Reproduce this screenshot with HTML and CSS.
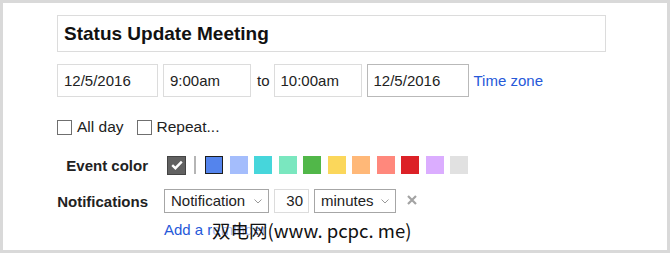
FILE: index.html
```html
<!DOCTYPE html>
<html lang="en">
<head>
    <meta charset="UTF-8">
    <meta name="viewport" content="width=device-width, initial-scale=1.0">
    <title>Event details</title>
    <link rel="stylesheet" href="styles.css">
</head>
<body>

<div class="frame">
    <div class="title-box">Status Update Meeting</div>

    <div class="date-row">
        <div class="box date">12/5/2016</div>
        <div class="box time">9:00am</div>
        <span class="to">to</span>
        <div class="box time">10:00am</div>
        <div class="box date active">12/5/2016</div>
        <a class="link" href="#">Time zone</a>
    </div>

    <div class="check-row">
        <label class="check"><span class="check-box"></span>All day</label>
        <label class="check"><span class="check-box"></span>Repeat...</label>
    </div>

    <div class="field-row color-row">
        <div class="field-label">Event color</div>
        <div class="swatches">
            <span class="swatch default">
                <svg width="12" height="10" viewBox="0 0 12 10"><path d="M1.2 5.2 L4.4 8.2 L10.8 1.6" fill="none" stroke="#fff" stroke-width="2.4"/></svg>
            </span>
            <span class="divider"></span>
            <span class="swatch selected" style="background:#5484ed"></span>
            <span class="swatch" style="background:#a4bdfc"></span>
            <span class="swatch" style="background:#46d6db"></span>
            <span class="swatch" style="background:#7ae7bf"></span>
            <span class="swatch" style="background:#51b749"></span>
            <span class="swatch" style="background:#fbd75b"></span>
            <span class="swatch" style="background:#ffb878"></span>
            <span class="swatch" style="background:#ff887c"></span>
            <span class="swatch" style="background:#dc2127"></span>
            <span class="swatch" style="background:#dbadff"></span>
            <span class="swatch" style="background:#e1e1e1"></span>
        </div>
    </div>

    <div class="field-row notif-row">
        <div class="field-label">Notifications</div>
        <div class="select kind">Notification
            <svg class="chev" width="8" height="5" viewBox="0 0 8 5"><path d="M0.5 0.5 L4 4 L7.5 0.5" fill="none" stroke="#999" stroke-width="1"/></svg>
        </div>
        <div class="box amount">30</div>
        <div class="select unit">minutes
            <svg class="chev" width="8" height="5" viewBox="0 0 8 5"><path d="M0.5 0.5 L4 4 L7.5 0.5" fill="none" stroke="#999" stroke-width="1"/></svg>
        </div>
        <svg class="remove" width="10" height="10" viewBox="0 0 10 10"><path d="M1 1 L9 9 M9 1 L1 9" stroke="#a3a3a3" stroke-width="2.2"/></svg>
    </div>

    <div class="reminder">
        <a class="link" href="#">Add a reminder</a>
        <span class="watermark">双电网(www. pcpc. me)</span>
    </div>
</div>

</body>
</html>
```

FILE: styles.css
```css
body {
    margin: 0;
    background: #d9d9d9;
    font-family: 'Liberation Sans', Arial, sans-serif;
    color: #222;
}
.frame {
    margin: 3px;
    height: 247px;
    background: #ffffff;
    padding: 12px 0 0 54px;
    box-sizing: border-box;
}
.title-box {
    width: 549px;
    height: 37px;
    border: 1px solid #dcdcdc;
    box-sizing: border-box;
    padding-left: 6px;
    font-size: 19px;
    font-weight: bold;
    line-height: 35px;
    color: #111;
}
.date-row {
    display: flex;
    align-items: center;
    margin-top: 12px;
    height: 33px;
    font-size: 15px;
}
.box {
    height: 33px;
    border: 1px solid #dcdcdc;
    box-sizing: border-box;
    padding-left: 6px;
    line-height: 31px;
    margin-right: 5px;
    color: #222;
}
.date { width: 101px; }
.date.active {
    width: 102px;
    border-color: #b9b9b9;
}
.time { width: 88px; }
.to {
    margin: 0 4px 0 1px;
}
.link {
    color: #2659d9;
    text-decoration: none;
}
.check-row {
    display: flex;
    align-items: center;
    margin-top: 20px;
    height: 20px;
    font-size: 15.5px;
}
.check {
    display: flex;
    align-items: center;
    margin-right: 13px;
}
.check-box {
    width: 15px;
    height: 15px;
    border: 1px solid #6f6f6f;
    box-sizing: border-box;
    margin-right: 5px;
}
.field-row {
    display: flex;
    align-items: center;
    height: 24px;
    font-size: 15px;
}
.color-row { margin-top: 16px; }
.notif-row { margin-top: 12px; }
.field-label {
    width: 91px;
    text-align: right;
    font-weight: bold;
    margin-right: 16px;
    color: #222;
    white-space: nowrap;
}
.swatches {
    display: flex;
    align-items: center;
    margin-left: 3px;
}
.swatch {
    width: 18px;
    height: 18px;
    box-sizing: border-box;
    margin-right: 6.5px;
    display: flex;
    align-items: center;
    justify-content: center;
}
.swatch.default {
    width: 19px;
    height: 19px;
    background: #616161;
    border: 1px solid #444;
    margin-right: 8px;
}
.swatch.selected {
    border: 1px solid #1d1d1d;
}
.divider {
    width: 2px;
    height: 18px;
    background: #b5b5b5;
    margin-right: 9px;
}
.select {
    height: 24px;
    border: 1px solid #a6a6a6;
    box-sizing: border-box;
    padding-left: 6px;
    line-height: 22px;
    display: flex;
    align-items: center;
    margin-right: 5px;
    color: #222;
}
.select .chev {
    margin-left: auto;
    margin-right: 6px;
}
.kind { width: 105px; }
.unit { width: 82px; }
.amount {
    width: 35px;
    height: 24px;
    line-height: 22px;
    text-align: right;
    padding: 0 5px 0 0;
}
.remove {
    margin-left: 6px;
    margin-bottom: 2px;
}
.reminder {
    position: relative;
    margin-top: 8px;
    padding-left: 107px;
    height: 18px;
    line-height: 18px;
    font-size: 15px;
}
.watermark {
    position: absolute;
    left: 155px;
    top: -2px;
    font-family: 'Noto Sans CJK SC', 'Noto Sans', sans-serif;
    font-size: 18.5px;
    line-height: 22px;
    color: #111;
    background: rgba(255, 255, 255, 0.6);
    white-space: nowrap;
}
```
